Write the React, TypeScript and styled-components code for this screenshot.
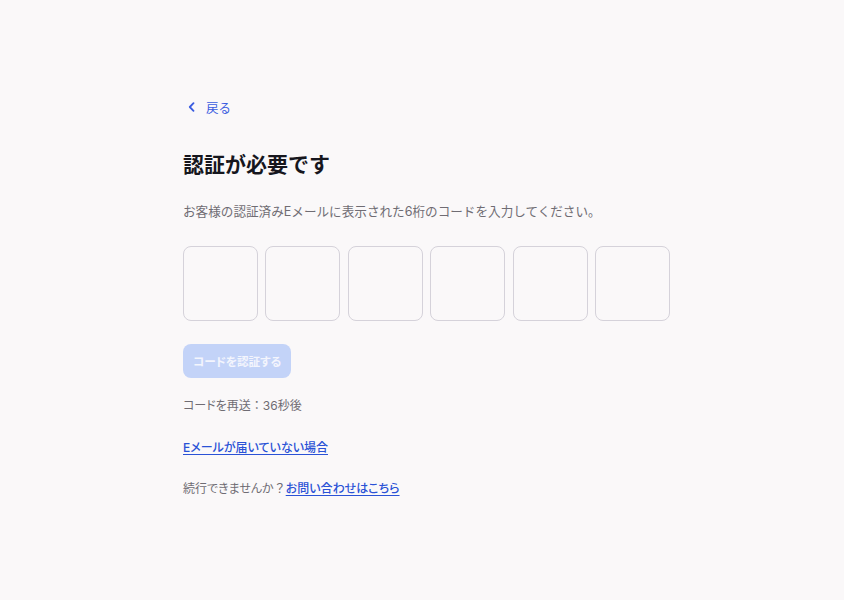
import styled, { createGlobalStyle } from "styled-components";

const GlobalStyle = createGlobalStyle`
  html, body {
    margin: 0;
    padding: 0;
    background: #faf8f9;
  }
  body {
    font-family: "Inter", "Noto Sans CJK JP", sans-serif;
    -webkit-font-smoothing: antialiased;
  }
`;

const Page = styled.main`
  min-height: 600px;
  padding: 96px 0 0 183px;
  box-sizing: border-box;
`;

const Back = styled.a`
  display: inline-flex;
  align-items: center;
  gap: 11px;
  height: 20px;
  padding-left: 5px;
  color: #3a5ce0;
  font-size: 12.5px;
  text-decoration: none;
  cursor: pointer;
`;

const Title = styled.h1`
  margin: 33px 0 0;
  font-size: 21px;
  line-height: 30px;
  font-weight: 700;
  color: #16161d;
`;

const Lead = styled.p`
  margin: 22px 0 0;
  font-size: 12.6px;
  line-height: 20px;
  color: #6f6c73;
`;

const CodeRow = styled.div`
  display: flex;
  gap: 7.4px;
  margin-top: 24px;
`;

const Digit = styled.input`
  width: 75px;
  height: 75px;
  box-sizing: border-box;
  border: 1px solid #d5d2da;
  border-radius: 8px;
  background: #faf8f9;
  font-size: 24px;
  text-align: center;
  outline: none;
`;

const Submit = styled.button`
  display: block;
  margin-top: 23px;
  height: 34px;
  padding: 0 10px;
  border: none;
  border-radius: 8px;
  background: #c3d3f8;
  color: #f3f5fd;
  font-family: inherit;
  font-size: 11.6px;
  font-weight: 700;
  font-feature-settings: "palt";
  cursor: not-allowed;
`;

const Note = styled.p<{ $top: number }>`
  margin: ${(p) => p.$top}px 0 0;
  font-size: 12px;
  line-height: 20px;
  color: #6f6c73;
  font-feature-settings: "palt";
`;

// full-width punctuation keeps its em box, as in the reference
const Wide = styled.span`
  font-feature-settings: normal;
`;

const Link = styled.a`
  color: #2a52d6;
  font-weight: 500;
  text-decoration: underline;
  text-underline-offset: 2px;
  cursor: pointer;
`;

export default function App() {
  return (
    <>
      <GlobalStyle />
      <Page>
        <Back>
          <svg width="7" height="10" viewBox="0 0 7 10" fill="none">
            <path d="M5.5 1.2L1.8 5l3.7 3.8" stroke="currentColor" strokeWidth="1.8" strokeLinecap="round" strokeLinejoin="round" />
          </svg>
          戻る
        </Back>
        <Title>認証が必要です</Title>
        <Lead>お客様の認証済みEメールに表示された6桁のコードを入力してください。</Lead>
        <CodeRow>
          {[0, 1, 2, 3, 4, 5].map((i) => (
            <Digit key={i} maxLength={1} inputMode="numeric" />
          ))}
        </CodeRow>
        <Submit disabled>コードを認証する</Submit>
        <Note $top={18}>
          コードを再送<Wide>：</Wide>36秒後
        </Note>
        <Note $top={22}>
          <Link>Eメールが届いていない場合</Link>
        </Note>
        <Note $top={21}>
          続行できませんか<Wide>？</Wide>
          <Link>お問い合わせはこちら</Link>
        </Note>
      </Page>
    </>
  );
}
